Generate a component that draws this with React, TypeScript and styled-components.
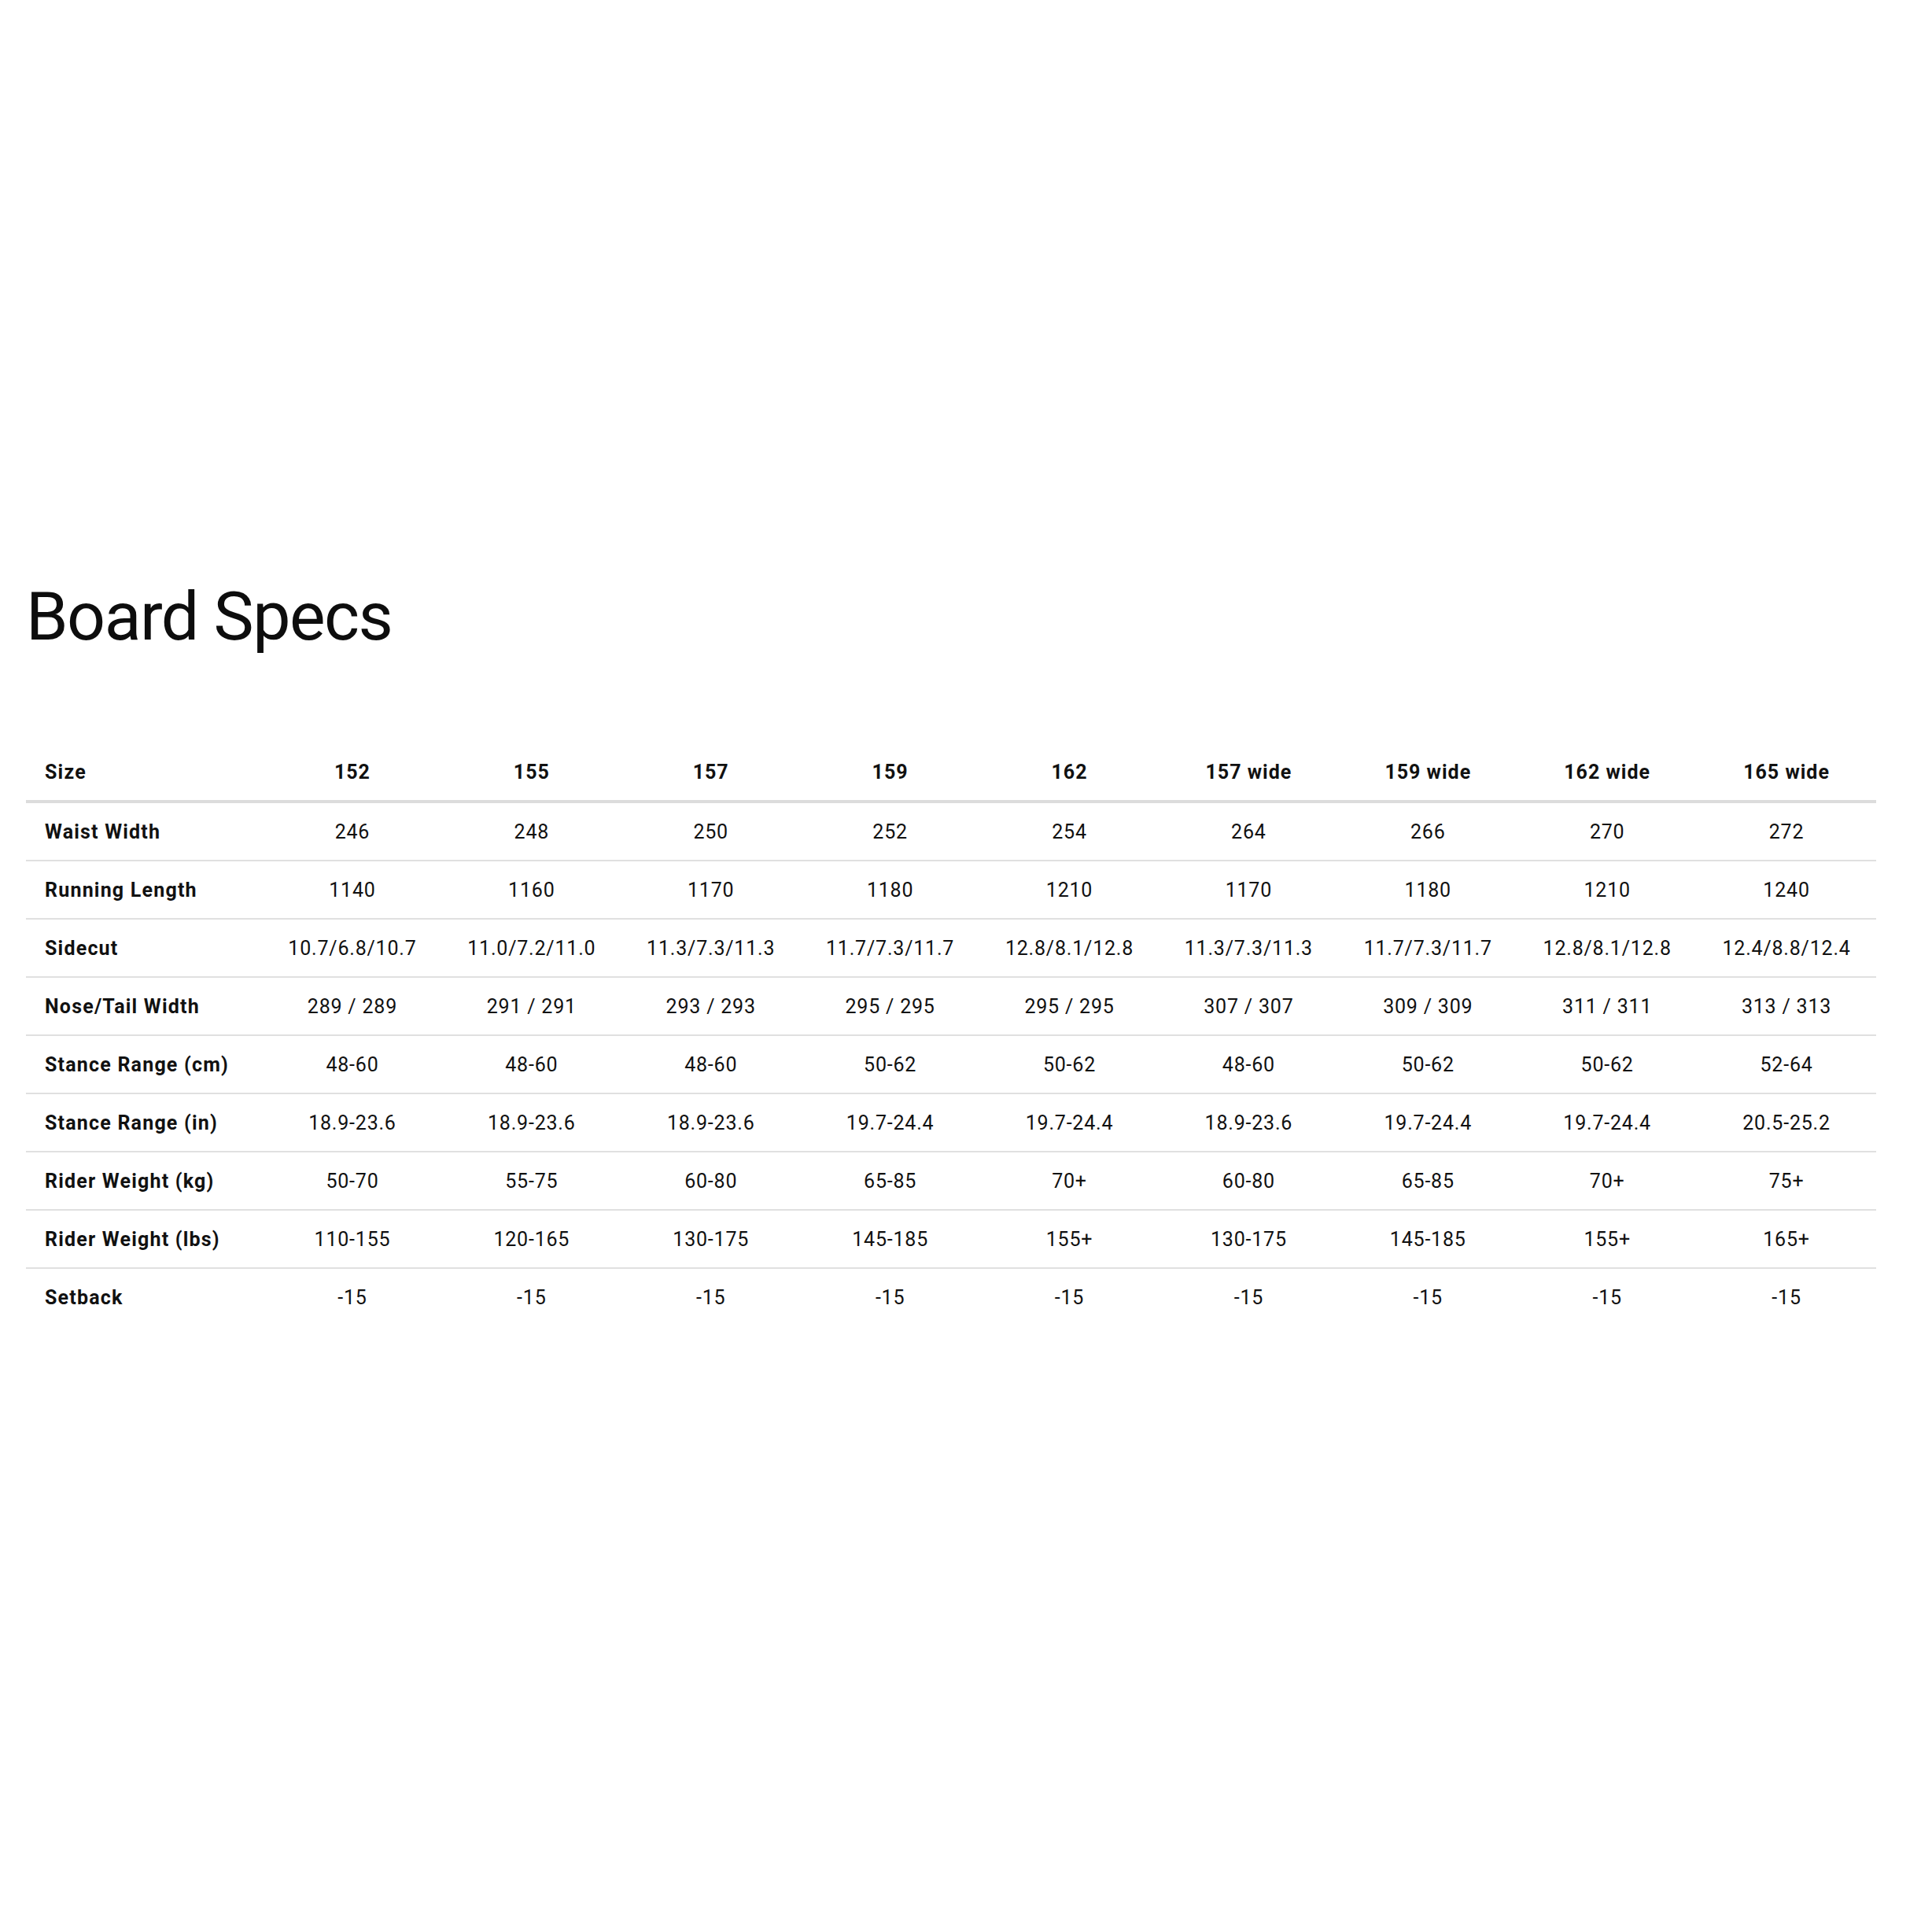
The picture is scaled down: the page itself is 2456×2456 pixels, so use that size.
import React from 'react';
import styled, { createGlobalStyle } from 'styled-components';

const GlobalStyle = createGlobalStyle`
  html, body {
    margin: 0;
    padding: 0;
    background: #fff;
  }
  body {
    font-family: Roboto, 'Liberation Sans', sans-serif;
    color: #111;
  }
`;

const Page = styled.div`
  width: 2456px;
  height: 2456px;
  box-sizing: border-box;
  padding: 741px 0 0 33px;
`;

const Title = styled.h1`
  margin: 0 0 118px 0;
  font-family: Roboto, 'Liberation Sans', sans-serif;
  font-weight: 400;
  font-size: 86px;
  line-height: 86px;
  letter-spacing: -1.5px;
  color: #0d0d0d;
`;

const Table = styled.div`
  width: 2352px;
  display: flex;
  flex-direction: column;
`;

const Row = styled.div<{ $header?: boolean; $last?: boolean }>`
  display: grid;
  grid-template-columns: 301px repeat(9, 1fr);
  align-items: center;
  height: 72px;
  border-bottom: ${(p) =>
    p.$last ? 'none' : p.$header ? '4px solid #dcdcdc' : '2px solid #e0e0e0'};
`;

const Label = styled.div`
  padding-left: 24px;
  font-size: 25px;
  font-weight: 700;
  letter-spacing: 1.2px;
  white-space: nowrap;
`;

const Cell = styled.div<{ $bold?: boolean }>`
  text-align: center;
  font-size: 25px;
  font-weight: ${(p) => (p.$bold ? 700 : 400)};
  letter-spacing: ${(p) => (p.$bold ? '1px' : '0.8px')};
  white-space: nowrap;
`;

const sizes = ['152', '155', '157', '159', '162', '157 wide', '159 wide', '162 wide', '165 wide'];

const rows: [string, string[]][] = [
  ['Waist Width', ['246', '248', '250', '252', '254', '264', '266', '270', '272']],
  ['Running Length', ['1140', '1160', '1170', '1180', '1210', '1170', '1180', '1210', '1240']],
  [
    'Sidecut',
    [
      '10.7/6.8/10.7',
      '11.0/7.2/11.0',
      '11.3/7.3/11.3',
      '11.7/7.3/11.7',
      '12.8/8.1/12.8',
      '11.3/7.3/11.3',
      '11.7/7.3/11.7',
      '12.8/8.1/12.8',
      '12.4/8.8/12.4',
    ],
  ],
  [
    'Nose/Tail Width',
    ['289 / 289', '291 / 291', '293 / 293', '295 / 295', '295 / 295', '307 / 307', '309 / 309', '311 / 311', '313 / 313'],
  ],
  ['Stance Range (cm)', ['48-60', '48-60', '48-60', '50-62', '50-62', '48-60', '50-62', '50-62', '52-64']],
  [
    'Stance Range (in)',
    ['18.9-23.6', '18.9-23.6', '18.9-23.6', '19.7-24.4', '19.7-24.4', '18.9-23.6', '19.7-24.4', '19.7-24.4', '20.5-25.2'],
  ],
  ['Rider Weight (kg)', ['50-70', '55-75', '60-80', '65-85', '70+', '60-80', '65-85', '70+', '75+']],
  [
    'Rider Weight (lbs)',
    ['110-155', '120-165', '130-175', '145-185', '155+', '130-175', '145-185', '155+', '165+'],
  ],
  ['Setback', ['-15', '-15', '-15', '-15', '-15', '-15', '-15', '-15', '-15']],
];

export default function App() {
  return (
    <>
      <GlobalStyle />
      <Page>
        <Title>Board Specs</Title>
        <Table>
          <Row $header>
            <Label>Size</Label>
            {sizes.map((s) => (
              <Cell key={s} $bold>
                {s}
              </Cell>
            ))}
          </Row>
          {rows.map(([label, values], i) => (
            <Row key={label} $last={i === rows.length - 1}>
              <Label>{label}</Label>
              {values.map((v, j) => (
                <Cell key={j}>{v}</Cell>
              ))}
            </Row>
          ))}
        </Table>
      </Page>
    </>
  );
}
